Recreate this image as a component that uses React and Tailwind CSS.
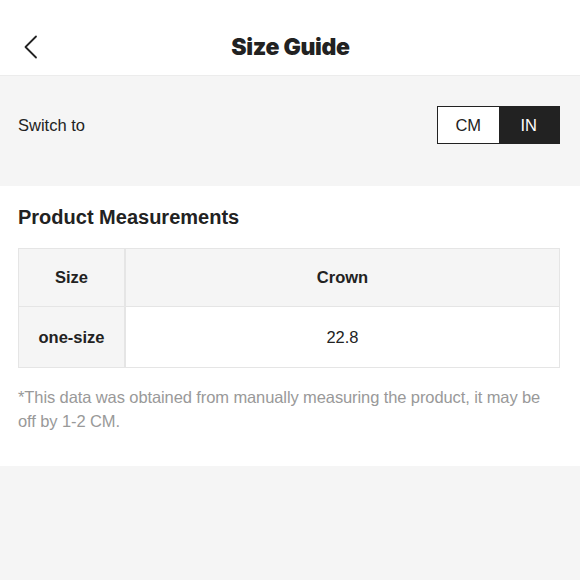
export default function App() {
  return (
    <div className="w-[580px] h-[580px] bg-[#f5f5f5] font-['Liberation_Sans',Arial,sans-serif] text-[#222] overflow-hidden">
      <div className="relative h-[76px] bg-white flex justify-center pt-[32px] border-b border-[#ececec]">
        <svg
          className="absolute left-[22px] top-[35px]"
          width="18"
          height="24"
          viewBox="0 0 18 24"
          fill="none"
          stroke="#222"
          strokeWidth="1.8"
          strokeLinecap="round"
          strokeLinejoin="round"
        >
          <path d="M14 1.5 L3.5 12 L14 22.5" />
        </svg>
        <h1 className="text-[23px] leading-[30px] font-black font-['Inter',sans-serif] tracking-[-0.3px] ml-[1px]">Size Guide</h1>
      </div>

      <div className="h-[110px] flex items-center justify-between pl-[18px] pr-[20px] pb-[12px]">
        <span className="text-[16.5px]">Switch to</span>
        <div className="flex h-[38px] w-[123px] border border-[#222] text-[16.5px]">
          <div className="flex-1 bg-white flex items-center justify-center">CM</div>
          <div className="flex-1 bg-[#222] text-white flex items-center justify-center">IN</div>
        </div>
      </div>

      <div className="bg-white pl-[18px] pr-[20px] pt-[19px] pb-[33px]">
        <h2 className="text-[20px] font-bold leading-[24px]">Product Measurements</h2>
        <div className="mt-[19px] border border-[#e5e5e5] text-[16.5px]">
          <div className="flex h-[58px] bg-[#f5f5f5] border-b border-[#e5e5e5]">
            <div className="w-[107px] flex items-center justify-center font-bold border-r-2 border-[#e5e5e5]">Size</div>
            <div className="flex-1 flex items-center justify-center font-bold">Crown</div>
          </div>
          <div className="flex h-[60px]">
            <div className="w-[107px] bg-[#f5f5f5] flex items-center justify-center font-bold border-r-2 border-[#e5e5e5]">one-size</div>
            <div className="flex-1 bg-white flex items-center justify-center">22.8</div>
          </div>
        </div>
        <p className="mt-[17px] max-w-[540px] text-[16.5px] tracking-[-0.1px] leading-[24px] text-[#999]">
          *This data was obtained from manually measuring the product, it may be off by 1-2 CM.
        </p>
      </div>
    </div>
  );
}
